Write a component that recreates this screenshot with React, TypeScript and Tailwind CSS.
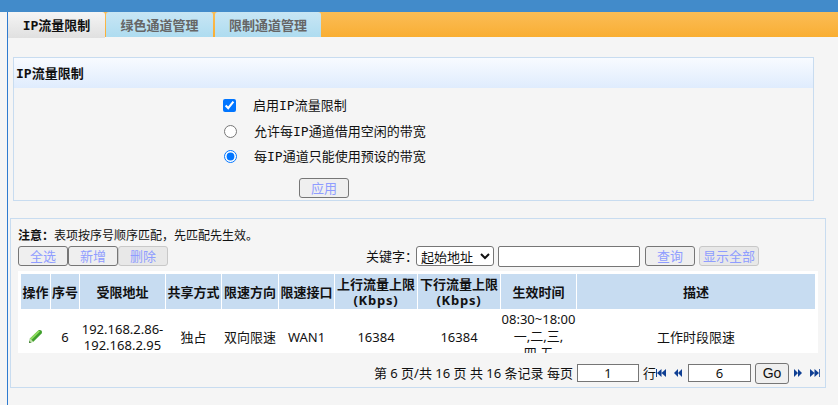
import type { ReactNode } from "react";

function Btn({ children, w, disabled }: { children: ReactNode; w: string; disabled?: boolean }) {
  return (
    <button
      className={`${w} h-[20px] rounded-[3px] border text-[13px] leading-[18px] text-[#8f9dff] ${disabled ? "border-[#c8c8c8] bg-[#e8e8e8]" : "border-[#767676] bg-[#efefef]"}`}
    >
      {children}
    </button>
  );
}

function Ip() {
  return <span style={{ fontFamily: '"DejaVu Sans Mono", monospace' }}>IP</span>;
}

function Pencil() {
  return (
    <svg width="15" height="15" viewBox="0 0 15 15">
      <path d="M1 14 L2 9.5 L10.5 1.2 Q12 0.4 13.4 1.6 Q14.6 3 13.6 4.4 L5.4 12.8 Z" fill="#3f9f2c" />
      <path d="M2 9.5 L10.5 1.2 L12 2.5 L3.5 11 Z" fill="#8fdc5f" />
      <path d="M1 14 L2 9.5 L5.4 12.8 Z" fill="#c4e3ae" />
      <path d="M1 14 L1.5 12 L3 13.4 Z" fill="#2f6b25" />
    </svg>
  );
}

function Nav({ kind }: { kind: "first" | "prev" | "next" | "last" }) {
  const paths: Record<string, string> = {
    first: "M0 0h1v8H0z M5.5 0v8L1 4z M10 0v8L5.5 4z",
    prev: "M4 0v8L0 4z M8 0v8L4 4z",
    next: "M0 0v8L4 4z M4 0v8L8 4z",
    last: "M0 0v8L4.5 4z M4.5 0v8L9 4z M9.2 0h.8v8h-.8z",
  };
  const w = kind === "first" || kind === "last" ? 10 : 8;
  return (
    <svg width={w} height="8" viewBox={`0 0 ${w} 8`} className="block shrink-0">
      <path d={paths[kind]} fill="#0f3f93" />
    </svg>
  );
}

const heads: [ReactNode, string][] = [
  ["操作", "w-[29px]"],
  ["序号", "w-[28px]"],
  ["受限地址", "w-[85px]"],
  ["共享方式", "w-[55px]"],
  ["限速方向", "w-[56px]"],
  ["限速接口", "w-[55px]"],
  [<>上行流量上限<br /><span className="tracking-[0.8px]">(Kbps)</span></>, "w-[82px]"],
  [<>下行流量上限<br /><span className="tracking-[0.8px]">(Kbps)</span></>, "w-[82px]"],
  ["生效时间", "w-[75px]"],
  ["描述", "w-[238px]"],
];

const cell = "flex h-[55px] shrink-0 items-center justify-center text-center";

export default function App() {
  return (
    <div
      className="h-[405px] w-[838px] overflow-hidden bg-[#f5f5f5] text-[13px] leading-[16px] text-[#111]"
      style={{ fontFamily: '"Noto Sans", "Noto Sans CJK SC", sans-serif' }}
    >
      <div className="h-[12px] bg-[#428bca]" />
      <div className="ml-[7px] h-[393px] border-l border-[#2f7bd0]">
        <div className="flex h-[25px] bg-gradient-to-b from-[#fbbd55] to-[#f9ae32]">
          <div className="flex h-[26px] w-[97px] items-center justify-center rounded-tr-[3px] bg-gradient-to-b from-[#f5f5f5] to-[#e0e0e0] font-bold"><span><Ip />流量限制</span></div>
          <div className="w-[1px]" />
          <div className="flex w-[107px] items-center justify-center rounded-t-[3px] bg-gradient-to-b from-[#c8e6f4] to-[#aedcf0] font-bold text-[#666]">绿色通道管理</div>
          <div className="w-[2px]" />
          <div className="flex w-[106px] items-center justify-center rounded-t-[3px] bg-gradient-to-b from-[#c8e6f4] to-[#aedcf0] font-bold text-[#666]">限制通道管理</div>
        </div>
        <div className="ml-[5px] mt-[20px] h-[144px] w-[801px] border border-[#c8dcf0]">
          <div className="flex h-[30px] items-center bg-gradient-to-b from-[#f8fbff] to-[#dfecfd] pl-[2px] font-bold"><span><Ip />流量限制</span></div>
          <div className="pl-[209px] pt-[5px]">
            <label className="flex h-[25px] items-center">
              <input type="checkbox" defaultChecked className="m-0" />
              <span className="ml-[17px]">启用<Ip />流量限制</span>
            </label>
            <label className="flex h-[26px] items-center">
              <input type="radio" name="m" className="m-0 ml-[1px]" />
              <span className="ml-[17px]">允许每<Ip />通道借用空闲的带宽</span>
            </label>
            <label className="flex h-[25px] items-center">
              <input type="radio" name="m" defaultChecked className="m-0 ml-[1px]" />
              <span className="ml-[17px]">每<Ip />通道只能使用预设的带宽</span>
            </label>
            <div className="ml-[76px] mt-[9px] flex"><Btn w="w-[50px]">应用</Btn></div>
          </div>
        </div>
        <div className="ml-[2px] mt-[17px] h-[170px] w-[816px] border border-[#c8dcf0]">
          <div className="h-[26px] pl-[7px] pt-[9px] text-[12px]"><b>注意：</b>表项按序号顺序匹配，先匹配先生效。</div>
          <div className="mb-[4px] flex h-[22px] items-center pl-[7px]">
            <Btn w="w-[50px]">全选</Btn>
            <Btn w="w-[50px]">新增</Btn>
            <Btn w="w-[50px]" disabled>删除</Btn>
            <span className="ml-[198px]">关键字：</span>
            <select className="-ml-[2px] h-[20px] w-[78px] rounded-[3px] border border-[#767676] bg-white text-[13px]">
              <option>起始地址</option>
            </select>
            <input className="ml-[4px] h-[21px] w-[142px] rounded-[2px] border border-[#767676] bg-white" />
            <span className="ml-[5px] flex"><Btn w="w-[50px]">查询</Btn></span>
            <span className="ml-[4px] flex"><Btn w="w-[60px]" disabled>显示全部</Btn></span>
          </div>
          <div className="ml-[7px] mr-[7px] h-[82px] overflow-hidden bg-white pl-[3px] pt-[3px]">
            <div className="flex gap-[1px]">
              {heads.map(([t, w], i) => (
                <div key={i} className={`${w} flex h-[35px] shrink-0 items-center justify-center bg-[#c7dcf1] text-center font-bold`}><div>{t}</div></div>
              ))}
            </div>
            <div className="flex gap-[1px]">
              <div className={`${cell} w-[29px]`}><Pencil /></div>
              <div className={`${cell} w-[28px]`}>6</div>
              <div className={`${cell} w-[85px]`}><div>192.168.2.86-<br />192.168.2.95</div></div>
              <div className={`${cell} w-[55px]`}>独占</div>
              <div className={`${cell} w-[56px]`}>双向限速</div>
              <div className={`${cell} w-[55px]`}>WAN1</div>
              <div className={`${cell} w-[82px]`}>16384</div>
              <div className={`${cell} w-[82px]`}>16384</div>
              <div className={`${cell} w-[75px] leading-[17px]`}><div>08:30~18:00<br />一,二,三,<br />四,五</div></div>
              <div className={`${cell} w-[238px]`}>工作时段限速</div>
            </div>
          </div>
          <div className="flex h-[34px] items-center justify-end pr-[5px] pt-[6px]">
            <span className="whitespace-pre">第 6 页/共 16 页 共 16 条记录 每页</span>
            <input defaultValue="1" className="ml-[4px] h-[18px] w-[62px] border border-[#767676] bg-white text-center" />
            <span className="ml-[4px]">行</span>
            <Nav kind="first" />
            <span className="ml-[8px]"><Nav kind="prev" /></span>
            <input defaultValue="6" className="ml-[6px] h-[18px] w-[63px] border border-[#767676] bg-white text-center" />
            <button className="ml-[4px] h-[21px] w-[34px] rounded-[3px] border border-[#767676] bg-[#efefef] text-[14px]" style={{ fontFamily: '"Liberation Sans"' }}>Go</button>
            <span className="ml-[5px]"><Nav kind="next" /></span>
            <span className="ml-[8px]"><Nav kind="last" /></span>
          </div>
        </div>
      </div>
    </div>
  );
}
